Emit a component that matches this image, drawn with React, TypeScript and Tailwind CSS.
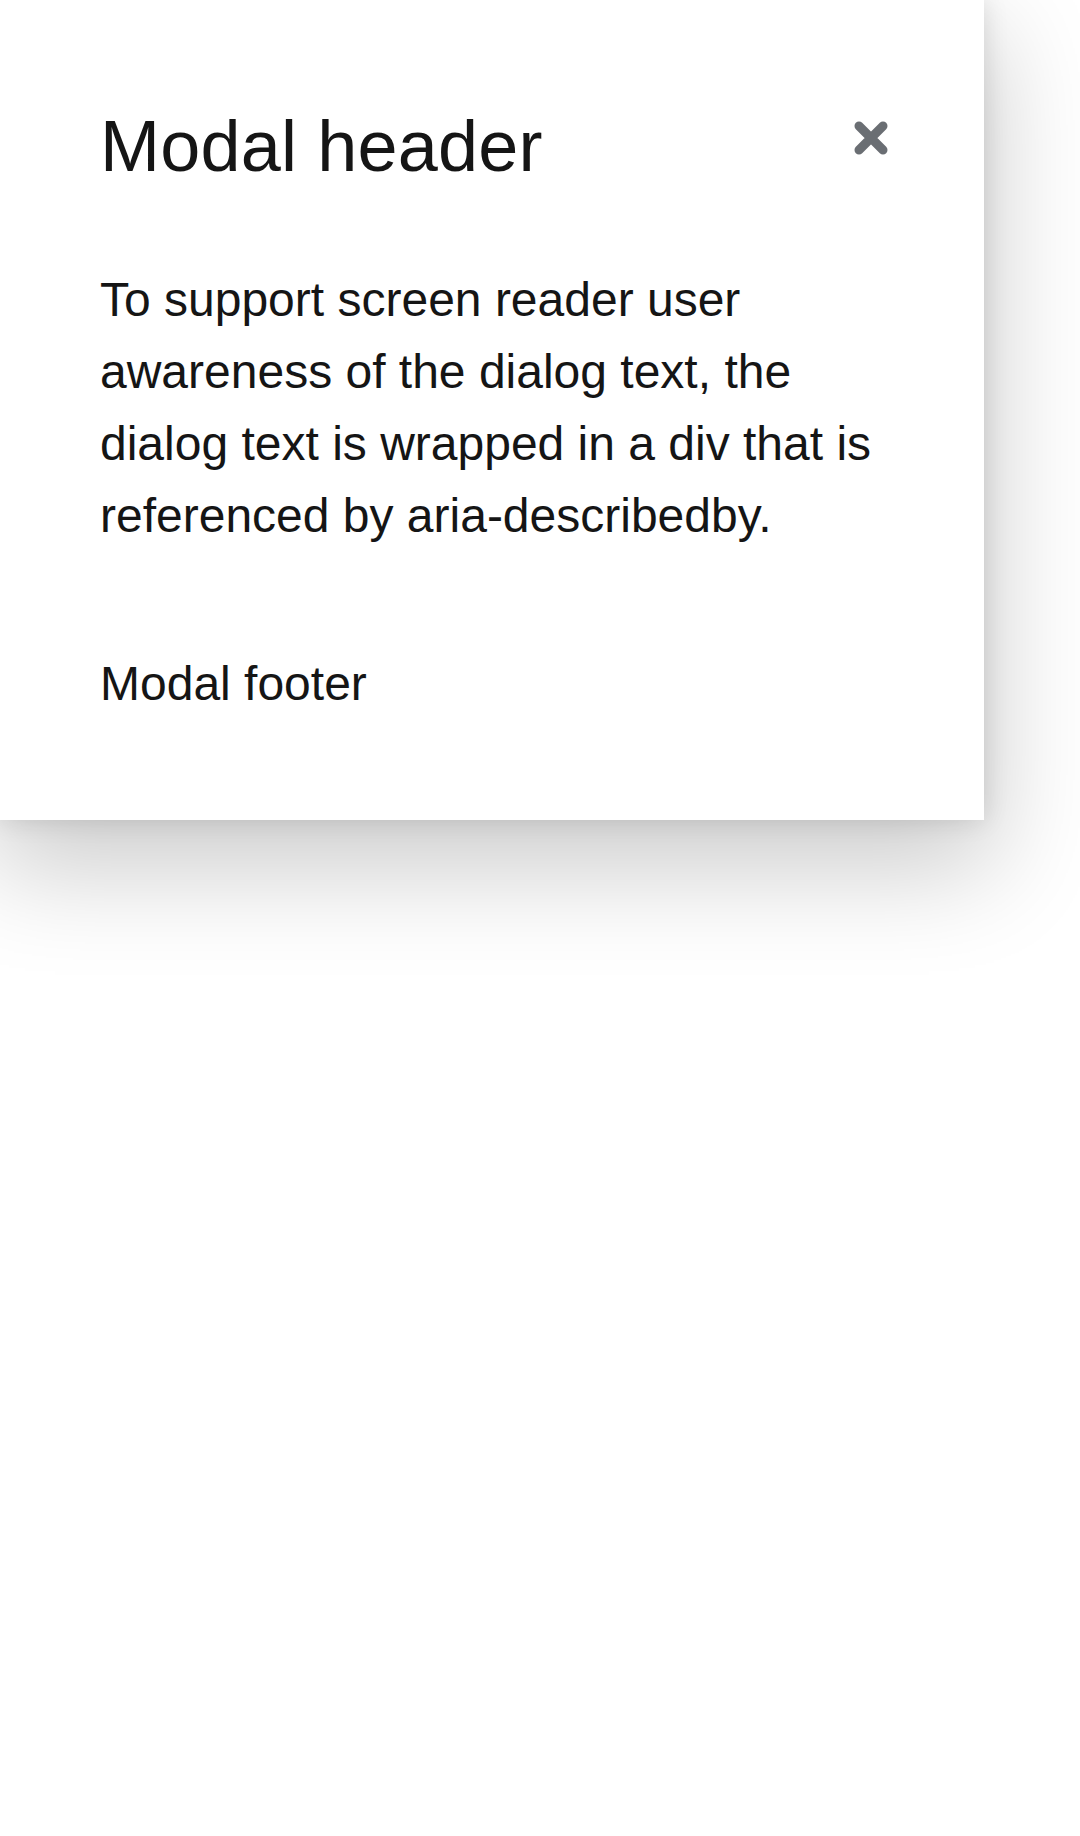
import React from 'react';

const CloseIcon: React.FC = () => (
  <svg width="34" height="34" viewBox="0 0 34 34" aria-hidden="true">
    <path d="M5 5 L29 29 M29 5 L5 29" stroke="#6a6e73" strokeWidth="9" strokeLinecap="round" fill="none" />
  </svg>
);

const App: React.FC = () => {
  return (
    <div className="min-h-[1836px] w-[1080px] bg-white overflow-hidden" style={{ fontFamily: '"Liberation Sans", Arial, sans-serif' }}>
      <div
        role="dialog"
        aria-labelledby="modal-title"
        aria-describedby="modal-desc"
        className="w-[984px] bg-white text-[#151515] pt-[99px] pb-[100px] px-[100px] shadow-[0_40px_100px_10px_rgba(3,3,3,0.2),0_0_24px_0_rgba(3,3,3,0.12)]"
      >
        <div className="flex items-start justify-between">
          <h1 id="modal-title" className="text-[72px] leading-[94px] font-normal tracking-[0.2px]">
            Modal header
          </h1>
          <button aria-label="Close" className="mt-[22px] mr-[-4px] w-[34px] h-[34px] flex items-center justify-center">
            <CloseIcon />
          </button>
        </div>
        <div id="modal-desc" className="mt-[71px] text-[48px] leading-[72px]">
          To support screen reader user awareness of the dialog text, the dialog text is wrapped in a div that is referenced by aria-describedby.
        </div>
        <footer className="mt-[96px] text-[48px] leading-[72px]">Modal footer</footer>
      </div>
    </div>
  );
};

export default App;
